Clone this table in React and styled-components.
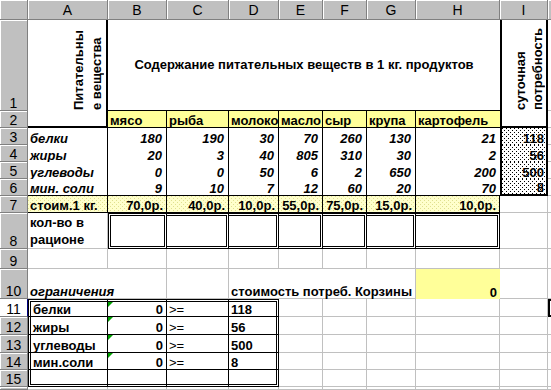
import React from "react";
import styled, { createGlobalStyle, css } from "styled-components";

const GRID = "1px solid #c0c0c0";
const BLACK = "1px solid #000";
const THICK = "2px solid #000";
const DOUBLE = "3px double #000";
const NONE = "none";

const COL_WIDTHS = [80, 59, 62, 50, 44, 44, 49, 84, 48];
const ROW_HEIGHTS = [91, 17, 17, 17, 17, 17, 17, 36, 20, 30, 18, 18, 18, 17, 17];
const LETTERS = ["A", "B", "C", "D", "E", "F", "G", "H", "I", ""];

const products = [
  { name: "мясо", values: [180, 20, 0, 9], price: "70,0р." },
  { name: "рыба", values: [190, 3, 0, 10], price: "40,0р." },
  { name: "молоко", values: [30, 40, 50, 7], price: "10,0р." },
  { name: "масло", values: [70, 805, 6, 12], price: "55,0р." },
  { name: "сыр", values: [260, 310, 2, 60], price: "75,0р." },
  { name: "крупа", values: [130, 30, 650, 20], price: "15,0р." },
  { name: "картофель", values: [21, 2, 200, 70], price: "10,0р." },
];
const nutrients = ["белки", "жиры", "углеводы", "мин. соли"];
const daily = [118, 56, 500, 8];
const limits = ["белки", "жиры", "углеводы", "мин.соли"];

const GlobalStyle = createGlobalStyle`
  html, body { margin: 0; padding: 0; background: #fff; }
  body { font-family: "Liberation Sans", Arial, sans-serif; }
`;

const Sheet = styled.div`
  display: grid;
  grid-template-columns: 28px ${COL_WIDTHS.map((w) => `${w}px`).join(" ")} 1fr;
  grid-template-rows: 20px ${ROW_HEIGHTS.map((h) => `${h}px`).join(" ")} 1fr;
  width: 551px;
  height: 390px;
  overflow: hidden;
  background: #fff;
  color: #000;
  font-family: "Liberation Sans", Arial, sans-serif;
`;

const Corner = styled.div`
  grid-row: 1;
  grid-column: 1;
  background: #c0c0c0;
  border-right: 1px solid #808080;
  border-bottom: 1px solid #808080;
  box-shadow: inset 1px 1px 0 #fff;
`;

const ColHead = styled.div`
  grid-row: 1;
  grid-column: ${(p) => p.$c + 1};
  display: flex;
  align-items: center;
  justify-content: center;
  background: #c0c0c0;
  border-right: 1px solid #808080;
  border-bottom: 1px solid #808080;
  box-shadow: inset 1px 1px 0 #fff;
  font-size: 14px;
  overflow: hidden;
`;

const RowHead = styled.div`
  grid-column: 1;
  grid-row: ${(p) => p.$r + 1};
  display: flex;
  align-items: flex-end;
  justify-content: center;
  background: ${(p) => (p.$active ? "#fff" : "#c0c0c0")};
  border-right: 1px solid ${(p) => (p.$active ? "#000080" : "#808080")};
  border-bottom: 1px solid #808080;
  box-shadow: inset 1px 1px 0 #fff;
  font-size: 14px;
  line-height: 14px;
  overflow: hidden;
`;

const dots = (base, dot) => css`
  background-color: ${base};
  background-image: conic-gradient(at 1px 1px, transparent 75%, ${dot} 0),
    conic-gradient(at 1px 1px, transparent 75%, ${dot} 0);
  background-size: 4px 4px;
  background-position: 0 0, 2px 2px;
`;

const Cell = styled.div`
  position: relative;
  grid-column: ${(p) => p.$c + 1} / span ${(p) => p.$cs || 1};
  grid-row: ${(p) => p.$r + 1} / span ${(p) => p.$rs || 1};
  display: flex;
  align-items: ${(p) => (p.$v === "center" ? "center" : "flex-end")};
  justify-content: ${(p) =>
    p.$h === "right" ? "flex-end" : p.$h === "center" ? "center" : "flex-start"};
  min-width: 0;
  min-height: 0;
  padding: 0 ${(p) => p.$pr ?? 2}px 0 2px;
  font-size: 13px;
  line-height: ${(p) => p.$lh || 12}px;
  font-weight: ${(p) => (p.$bold ? 700 : 400)};
  font-style: ${(p) => (p.$italic ? "italic" : "normal")};
  white-space: ${(p) => (p.$wrap ? "pre-line" : "nowrap")};
  background-color: ${(p) => p.$fill || "transparent"};
  ${(p) => p.$pattern === "gray" && dots("#fff", "#000")}
  ${(p) => p.$pattern === "yellow" && dots("#ffffcc", "#e0e090")}
  border-top: ${(p) => p.$bt || NONE};
  border-left: ${(p) => p.$bl || NONE};
  border-right: ${(p) => p.$br || (p.$fill ? NONE : GRID)};
  border-bottom: ${(p) => p.$bb || (p.$fill ? NONE : GRID)};
`;

// rotated header text, reads bottom to top, lines start at the bottom edge
const Vertical = styled.span`
  display: block;
  flex: none;
  width: ${(p) => p.$lines * p.$lh}px;
  height: 90px;
  writing-mode: vertical-rl;
  transform: rotate(180deg);
  text-align: start;
  white-space: pre;
  font-weight: 700;
  line-height: ${(p) => p.$lh}px;
  align-self: flex-start;
`;

const Marker = styled.span`
  position: absolute;
  top: 0;
  left: 0;
  width: 0;
  height: 0;
  border-top: 5px solid #00a000;
  border-right: 5px solid transparent;
`;

function buildCells() {
  const list = [];
  const add = (r, c, o = {}) => list.push({ r, c, ...o });

  // header block
  add(1, 1, { fill: "#fff", br: THICK, h: "right", pr: 0, vertical: "Питательны\nе вещества", vlh: 18 });
  add(1, 2, {
    cs: 7,
    fill: "#fff",
    bb: BLACK,
    h: "center",
    v: "center",
    bold: true,
    text: "Содержание питательных веществ в 1 кг. продуктов",
  });
  add(1, 9, { fill: "#fff", bl: THICK, br: THICK, h: "right", pr: 0, vertical: "суточная\nпотребность", vlh: 17 });
  add(2, 1, { fill: "#fff", br: THICK, bb: THICK });
  products.forEach((p, i) =>
    add(2, i + 2, { fill: "#ffff99", br: i === 6 ? NONE : BLACK, bb: BLACK, bold: true, text: p.name })
  );
  add(2, 9, { fill: "#fff", bl: THICK, br: THICK, bb: THICK });

  // nutrients
  nutrients.forEach((n, k) => {
    const r = k + 3;
    const last = k === 3;
    add(r, 1, { fill: "#fff", br: BLACK, bb: last ? BLACK : NONE, bold: true, italic: true, text: n });
    products.forEach((p, i) =>
      add(r, i + 2, {
        fill: "#fff",
        br: i === 6 ? NONE : BLACK,
        bb: last ? BLACK : NONE,
        bold: true,
        italic: true,
        h: "right",
        pr: 4,
        text: p.values[k],
      })
    );
    add(r, 9, {
      pattern: "gray",
      fill: "#fff",
      bl: THICK,
      br: THICK,
      bb: last ? THICK : NONE,
      bold: true,
      h: "right",
      pr: 2,
      text: daily[k],
    });
  });

  // prices
  add(7, 1, { pattern: "yellow", fill: "#ffffcc", br: BLACK, bb: BLACK, bold: true, text: "стоим.1 кг." });
  products.forEach((p, i) =>
    add(7, i + 2, { pattern: "yellow", fill: "#ffffcc", br: BLACK, bb: BLACK, bold: true, h: "right", pr: 3, text: p.price })
  );

  // ration
  add(8, 1, { bold: true, wrap: true, lh: 17, text: "кол-во в\nрационе" });
  products.forEach((p, i) =>
    add(8, i + 2, { fill: "#fff", bt: DOUBLE, bb: DOUBLE, br: DOUBLE, bl: i === 0 ? DOUBLE : NONE })
  );

  // row 10
  add(10, 1, { bold: true, italic: true, br: NONE, text: "ограничения" });
  add(10, 4, { cs: 4, bold: true, h: "right", pr: 3, text: "стоимость потреб. Корзины" });
  add(10, 8, { fill: "#ffff99", bold: true, h: "right", pr: 3, text: "0" });

  // constraints table
  for (let r = 11; r <= 15; r++) {
    const k = r - 11;
    const has = k < 4;
    const base = (c) => ({
      bt: r === 11 ? DOUBLE : NONE,
      bl: c === 1 ? DOUBLE : NONE,
      br: c === 4 ? DOUBLE : BLACK,
      bb: r === 15 ? DOUBLE : BLACK,
    });
    add(r, 1, { ...base(1), bold: true, text: has ? limits[k] : "" });
    add(r, 2, { ...base(2), bold: true, h: "right", pr: 3, marker: has, text: has ? "0" : "" });
    add(r, 3, { ...base(3), text: has ? ">=" : "" });
    add(r, 4, { ...base(4), bold: true, text: has ? daily[k] : "" });
  }

  // active cell J11
  add(11, 10, { bt: THICK, bl: THICK, bb: THICK, br: NONE });

  const taken = new Set();
  list.forEach((s) => {
    for (let dr = 0; dr < (s.rs || 1); dr++)
      for (let dc = 0; dc < (s.cs || 1); dc++) taken.add(`${s.r + dr}:${s.c + dc}`);
  });
  for (let r = 1; r <= 16; r++)
    for (let c = 1; c <= 10; c++) if (!taken.has(`${r}:${c}`)) add(r, c);

  return list;
}

const cells = buildCells();

export default function App() {
  return (
    <>
      <GlobalStyle />
      <Sheet>
        <Corner />
        {LETTERS.map((l, i) => (
          <ColHead key={i} $c={i + 1}>
            {l}
          </ColHead>
        ))}
        {Array.from({ length: 16 }, (_, i) => (
          <RowHead key={i} $r={i + 1} $active={i + 1 === 11}>
            {i < 15 ? i + 1 : ""}
          </RowHead>
        ))}
        {cells.map((s) => (
          <Cell
            key={`${s.r}:${s.c}`}
            $r={s.r}
            $c={s.c}
            $cs={s.cs}
            $rs={s.rs}
            $fill={s.fill}
            $pattern={s.pattern}
            $bt={s.bt}
            $br={s.br}
            $bb={s.bb}
            $bl={s.bl}
            $h={s.h}
            $v={s.v}
            $pr={s.pr}
            $lh={s.lh}
            $bold={s.bold}
            $italic={s.italic}
            $wrap={s.wrap}
          >
            {s.vertical ? (
              <Vertical $lines={2} $lh={s.vlh}>
                {s.vertical}
              </Vertical>
            ) : (
              s.text
            )}
            {s.marker && <Marker />}
          </Cell>
        ))}
      </Sheet>
    </>
  );
}
